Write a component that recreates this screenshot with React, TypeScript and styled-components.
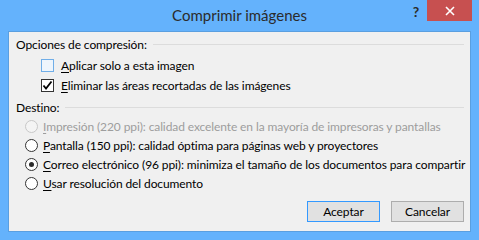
import styled, { createGlobalStyle } from 'styled-components'

const GlobalStyle = createGlobalStyle`
	html, body {
		margin: 0;
		padding: 0;
		background: #64b2fc;
	}
	* {
		box-sizing: border-box;
	}
`

const Window = styled.div`
	width: 479px;
	height: 240px;
	background: #64b2fc;
	display: flex;
	flex-direction: column;
	padding: 0 8px 8px 8px;
	font-family: Lato, 'Noto Sans', sans-serif;
	font-size: 12px;
	letter-spacing: -0.1px;
	color: #000;
	white-space: nowrap;
`

const TitleBar = styled.div`
	height: 31px;
	position: relative;
	display: flex;
	align-items: center;
	justify-content: center;
`

const Title = styled.div`
	font-size: 15px;
	color: #2b2b2b;
	padding-bottom: 1px;
	letter-spacing: 0;
`

const HelpButton = styled.div`
	position: absolute;
	left: 400px;
	top: 1px;
	width: 16px;
	height: 20px;
	font-weight: bold;
	font-size: 14px;
	color: #2b2b2b;
	display: flex;
	align-items: center;
	justify-content: center;
`

const CloseButton = styled.div`
	position: absolute;
	left: 419px;
	top: 0;
	width: 45px;
	height: 21px;
	background: #c75050;
	display: flex;
	align-items: center;
	justify-content: center;
`

const Panel = styled.div`
	flex: 1;
	background: #f0f0f0;
	border: 1px solid #5a9fe0;
	padding: 2px 6px 0 7px;
	display: flex;
	flex-direction: column;
`

const GroupHeader = styled.div<{ $top?: number }>`
	height: 20px;
	margin-top: ${p => p.$top ?? 0}px;
	display: flex;
	align-items: center;
	gap: 6px;

	&::after {
		content: '';
		flex: 1;
		height: 1px;
		background: #dcdcdc;
		margin-top: 1px;
	}
`

const CheckRow = styled.label<{ $top?: number }>`
	height: 20px;
	margin-top: ${p => p.$top ?? 0}px;
	padding-left: 25px;
	display: flex;
	align-items: center;
	gap: 7px;
`

const Box = styled.span<{ $hover?: boolean }>`
	flex-shrink: 0;
	width: 13px;
	height: 13px;
	border: 1px solid ${p => (p.$hover ? '#70aee8' : '#333')};
	background: ${p => (p.$hover ? '#eef5fc' : '#fff')};
	display: flex;
	align-items: center;
	justify-content: center;
`

const RadioRow = styled.label<{ $disabled?: boolean }>`
	height: 19px;
	padding-left: 9px;
	display: flex;
	align-items: center;
	gap: 5px;
	color: ${p => (p.$disabled ? '#9d9d9d' : '#000')};
`

const Circle = styled.span<{ $disabled?: boolean }>`
	flex-shrink: 0;
	width: 13px;
	height: 13px;
	border-radius: 50%;
	border: 1px solid ${p => (p.$disabled ? '#c8c8c8' : '#333')};
	background: ${p => (p.$disabled ? '#f4f4f4' : '#fff')};
	display: flex;
	align-items: center;
	justify-content: center;
`

const Dot = styled.span`
	width: 5px;
	height: 5px;
	border-radius: 50%;
	background: #2b2b2b;
`

const Key = styled.span`
	text-decoration: underline;
	text-underline-offset: 2px;
`

const ButtonBar = styled.div`
	margin-top: 8px;
	display: flex;
	justify-content: flex-end;
	gap: 11px;
`

const Button = styled.div<{ $default?: boolean }>`
	width: 73px;
	height: 21px;
	border: 1px solid ${p => (p.$default ? '#3399ff' : '#adadad')};
	background: #e1e1e1;
	display: flex;
	align-items: center;
	justify-content: center;
`

const Check = () => (
	<svg width="11" height="11" viewBox="0 0 11 11">
		<path d="M1.5 5.5 L4 8.5 L9.5 1.5" fill="none" stroke="#000" strokeWidth="1.8" />
	</svg>
)

const CloseIcon = () => (
	<svg width="10" height="10" viewBox="0 0 10 10">
		<path d="M1 1 L9 9 M9 1 L1 9" stroke="#fff" strokeWidth="1.6" />
	</svg>
)

const App = () => {
	return (
		<>
			<GlobalStyle />
			<Window>
				<TitleBar>
					<Title>Comprimir imágenes</Title>
					<HelpButton>?</HelpButton>
					<CloseButton>
						<CloseIcon />
					</CloseButton>
				</TitleBar>
				<Panel>
					<GroupHeader>Opciones de compresión:</GroupHeader>
					<CheckRow $top={1}>
						<Box $hover />
						<span>
							<Key>A</Key>plicar solo a esta imagen
						</span>
					</CheckRow>
					<CheckRow>
						<Box>
							<Check />
						</Box>
						<span>
							<Key>E</Key>liminar las áreas recortadas de las imágenes
						</span>
					</CheckRow>
					<GroupHeader $top={2}>Destino:</GroupHeader>
					<RadioRow $disabled>
						<Circle $disabled />
						<span>
							<Key>I</Key>mpresión (220 ppi): calidad excelente en la mayoría de impresoras y pantallas
						</span>
					</RadioRow>
					<RadioRow>
						<Circle />
						<span>
							<Key>P</Key>antalla (150 ppi): calidad óptima para páginas web y proyectores
						</span>
					</RadioRow>
					<RadioRow>
						<Circle>
							<Dot />
						</Circle>
						<span>
							<Key>C</Key>orreo electrónico (96 ppi): minimiza el tamaño de los documentos para compartir
						</span>
					</RadioRow>
					<RadioRow>
						<Circle />
						<span>
							<Key>U</Key>sar resolución del documento
						</span>
					</RadioRow>
					<ButtonBar>
						<Button $default>Aceptar</Button>
						<Button>Cancelar</Button>
					</ButtonBar>
				</Panel>
			</Window>
		</>
	)
}

export default App
